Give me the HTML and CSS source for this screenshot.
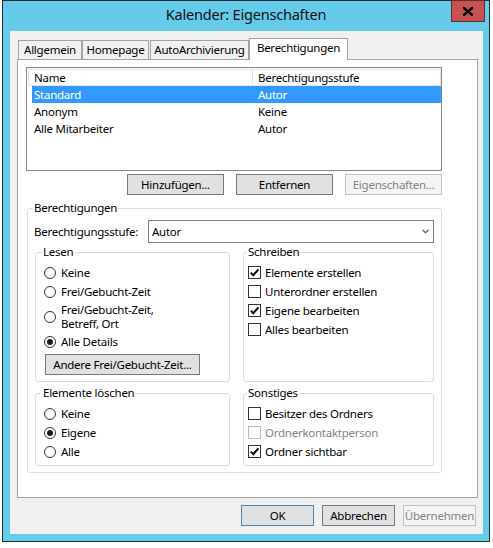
FILE: index.html
```html
<!DOCTYPE html>
<html lang="de">
<head>
<meta charset="utf-8">
<title>Kalender: Eigenschaften</title>
<link rel="stylesheet" href="styles.css">
</head>
<body>
<div class="window">
  <div class="titlebar">
    <span class="titlebar-spacer"></span>
    <div class="title">Kalender: Eigenschaften</div>
    <button class="close" type="button" aria-label="Schließen">
      <svg width="10" height="9" viewBox="0 0 10 9"><path d="M1 1 L9 8 M9 1 L1 8" stroke="#000" stroke-width="2.4" stroke-linecap="square" fill="none"/></svg>
    </button>
  </div>

  <div class="client">
    <div class="tabs">
      <div class="tab tab-general">Allgemein</div>
      <div class="tab tab-home">Homepage</div>
      <div class="tab tab-archive">AutoArchivierung</div>
      <div class="tab tab-perm tab-active">Berechtigungen</div>
    </div>

    <div class="page">
      <div class="listview">
        <div class="lv-header">
          <div class="lv-head lv-head-name">Name</div>
          <div class="lv-head lv-head-level">Berechtigungsstufe</div>
        </div>
        <div class="lv-row lv-row-selected">
          <div class="lv-cell lv-cell-name">Standard</div>
          <div class="lv-cell lv-cell-level">Autor</div>
        </div>
        <div class="lv-row">
          <div class="lv-cell lv-cell-name">Anonym</div>
          <div class="lv-cell lv-cell-level">Keine</div>
        </div>
        <div class="lv-row">
          <div class="lv-cell lv-cell-name">Alle Mitarbeiter</div>
          <div class="lv-cell lv-cell-level">Autor</div>
        </div>
      </div>

      <div class="list-actions">
        <button class="btn btn-list" type="button">Hinzufügen...</button>
        <button class="btn btn-list" type="button">Entfernen</button>
        <button class="btn btn-list btn-disabled" type="button">Eigenschaften...</button>
      </div>

      <fieldset class="group group-main">
        <legend class="legend legend-main">Berechtigungen</legend>
        <div class="group-body group-body-main">
          <div class="level-row">
            <span class="level-label">Berechtigungsstufe:</span>
            <div class="select">
              <span class="select-value">Autor</span>
              <svg class="select-arrow" width="7" height="5" viewBox="0 0 7 5"><path d="M0.5 0.8 L3.5 3.8 L6.5 0.8" stroke="#6a6a6a" stroke-width="1.3" fill="none"/></svg>
            </div>
          </div>

          <div class="group-grid">
            <fieldset class="group group-radio">
              <legend class="legend legend-radio">Lesen</legend>
              <div class="group-body group-body-radio">
                <div class="opt"><span class="radio"></span><span class="opt-text">Keine</span></div>
                <div class="opt"><span class="radio"></span><span class="opt-text">Frei/Gebucht-Zeit</span></div>
                <div class="opt opt-multi"><span class="radio"></span><span class="opt-text"><span class="opt-line">Frei/Gebucht-Zeit,</span><span class="opt-line">Betreff, Ort</span></span></div>
                <div class="opt"><span class="radio radio-on"></span><span class="opt-text">Alle Details</span></div>
                <button class="btn btn-freebusy" type="button">Andere Frei/Gebucht-Zeit...</button>
              </div>
            </fieldset>

            <fieldset class="group group-check">
              <legend class="legend legend-check">Schreiben</legend>
              <div class="group-body group-body-check">
                <div class="opt"><span class="check"><svg width="11" height="11" viewBox="0 0 11 11"><path d="M1.8 5.6 L4.3 8.2 L9.4 2.4" stroke="#000" stroke-width="2" fill="none"/></svg></span><span class="opt-text">Elemente erstellen</span></div>
                <div class="opt"><span class="check"></span><span class="opt-text">Unterordner erstellen</span></div>
                <div class="opt"><span class="check"><svg width="11" height="11" viewBox="0 0 11 11"><path d="M1.8 5.6 L4.3 8.2 L9.4 2.4" stroke="#000" stroke-width="2" fill="none"/></svg></span><span class="opt-text">Eigene bearbeiten</span></div>
                <div class="opt"><span class="check"></span><span class="opt-text">Alles bearbeiten</span></div>
              </div>
            </fieldset>

            <fieldset class="group group-radio">
              <legend class="legend legend-radio">Elemente löschen</legend>
              <div class="group-body group-body-radio group-body-delete">
                <div class="opt"><span class="radio"></span><span class="opt-text">Keine</span></div>
                <div class="opt"><span class="radio radio-on"></span><span class="opt-text">Eigene</span></div>
                <div class="opt"><span class="radio"></span><span class="opt-text">Alle</span></div>
              </div>
            </fieldset>

            <fieldset class="group group-check">
              <legend class="legend legend-check">Sonstiges</legend>
              <div class="group-body group-body-check group-body-delete">
                <div class="opt"><span class="check"></span><span class="opt-text">Besitzer des Ordners</span></div>
                <div class="opt opt-disabled"><span class="check check-disabled"></span><span class="opt-text">Ordnerkontaktperson</span></div>
                <div class="opt"><span class="check"><svg width="11" height="11" viewBox="0 0 11 11"><path d="M1.8 5.6 L4.3 8.2 L9.4 2.4" stroke="#000" stroke-width="2" fill="none"/></svg></span><span class="opt-text">Ordner sichtbar</span></div>
              </div>
            </fieldset>
          </div>
        </div>
      </fieldset>
    </div>

    <div class="dialog-actions">
      <button class="btn btn-dialog btn-default" type="button">OK</button>
      <button class="btn btn-dialog" type="button">Abbrechen</button>
      <button class="btn btn-dialog btn-disabled" type="button">Übernehmen</button>
    </div>
  </div>
</div>
</body>
</html>
```
FILE: styles.css
```css
* {
  box-sizing: border-box;
}

html,
body {
  margin: 0;
}

body {
  background: #fff;
  color: #000;
  font-family: "Noto Sans", "Open Sans", sans-serif;
  font-size: 11.5px;
  letter-spacing: -0.25px;
}

/* Window frame */
.window {
  margin-left: 2px;
  width: 488px;
  height: 542px;
  border: 1px solid #2d2d2d;
  background: #65cbea;
  padding: 0 6px 7px 7px;
  display: flex;
  flex-direction: column;
}

.titlebar {
  height: 30px;
  margin: 0 -6px 0 -7px;
  display: grid;
  grid-template-columns: 1fr auto 1fr;
  align-items: start;
}

.title {
  height: 27px;
  line-height: 27px;
  font-size: 14.5px;
  letter-spacing: -0.2px;
  color: #111;
  white-space: nowrap;
}

.close {
  justify-self: end;
  margin: -1px 4px 0 0;
  width: 34px;
  height: 22px;
  padding: 0;
  border: 1px solid #5b3230;
  background: #c75050;
  display: flex;
  align-items: center;
  justify-content: center;
}

.close svg {
  display: block;
}

/* Dialog client area */
.client {
  flex: 1;
  background: #f0f0f0;
  padding: 7px 5px 0 7px;
  display: flex;
  flex-direction: column;
}

.tabs {
  height: 21px;
  margin-left: 1px;
  display: flex;
  align-items: flex-end;
}

.tab {
  height: 19px;
  line-height: 17px;
  border: 1px solid #a3a3a3;
  border-bottom: none;
  background: #f0f0f0;
  text-align: center;
  white-space: nowrap;
}

.tab-general { width: 64px; }
.tab-home { width: 67px; }
.tab-archive { width: 99px; margin-left: 1px; }
.tab-perm { width: 99px; }

.tab-active {
  height: 22px;
  line-height: 17px;
  background: #fff;
  margin-bottom: -1px;
  position: relative;
  z-index: 1;
}

.page {
  height: 439px;
  border: 1px solid #a3a3a3;
  background: #fff;
  padding: 7px 0 0 8px;
}

/* Permission list */
.listview {
  width: 416px;
  height: 104px;
  border: 1px solid #828790;
  padding: 1px 0 0 1px;
}

.lv-header {
  height: 17px;
  display: flex;
  border: 1px solid #e5e5e5;
  border-right: none;
  line-height: 15px;
}

.lv-head {
  border-right: 1px solid #e5e5e5;
  padding-left: 5px;
}

.lv-head-name {
  width: 224px;
}

.lv-head-level {
  flex: 1;
}

.lv-row {
  height: 17px;
  line-height: 17px;
  margin-left: 4px;
  display: flex;
}

.lv-row-selected {
  background: #3399ff;
  color: #fff;
}

.lv-cell-name {
  width: 220px;
  padding-left: 2px;
}

.lv-cell-level {
  padding-left: 6px;
}

.list-actions {
  width: 416px;
  margin-top: 3px;
  display: flex;
  justify-content: flex-end;
  gap: 12px;
}

/* Buttons */
.btn {
  height: 21px;
  padding: 0;
  border: 1px solid #7a7a7a;
  background: #e1e1e1;
  color: #000;
  font: inherit;
  letter-spacing: inherit;
  line-height: 19px;
  text-align: center;
  white-space: nowrap;
}

.btn-list {
  width: 97px;
}

.btn-disabled {
  border-color: #c2c2c2;
  background: #f4f4f4;
  color: #838383;
}

.btn-default {
  border-color: #4a84b8;
}

.btn-freebusy {
  display: block;
  width: 155px;
  margin: 3px 0 0 1px;
}

.dialog-actions {
  margin-top: 7px;
  padding-right: 2px;
  display: flex;
  justify-content: flex-end;
  gap: 8px;
}

.btn-dialog {
  width: 73px;
}

/* Group boxes */
.group {
  margin: 0;
  padding: 0;
  min-width: 0;
  border: 1px solid #dcdcdc;
  border-radius: 3px;
}

.legend {
  padding: 0 1px;
  height: 14px;
  line-height: 14px;
}

.group-main {
  width: 415px;
  margin: 6px 0 0 1px;
}

.legend-main { margin-left: 5px; }
.legend-radio { margin-left: 6px; }
.legend-check { margin-left: 3px; }

.group-body-main {
  padding: 5px 7px 6px 6px;
}

.level-row {
  display: flex;
  align-items: center;
}

.level-label {
  width: 114px;
  flex: none;
}

.select {
  flex: 1;
  height: 23px;
  border: 1px solid #7f7f7f;
  background: #fff;
  padding: 0 4px 0 3px;
  display: flex;
  align-items: center;
  justify-content: space-between;
}

.select-arrow {
  display: block;
}

.group-grid {
  margin: 2px 0 0 1px;
  display: grid;
  grid-template-columns: 195px 1fr;
  column-gap: 13px;
  row-gap: 4px;
}

.group-body-radio {
  padding: 4px 0 6px 8px;
}

.group-body-check {
  padding: 4px 0 6px 4px;
}

.group-body-delete {
  padding-bottom: 4px;
}

/* Options */
.opt {
  height: 19px;
  display: flex;
  align-items: center;
}

.opt-multi {
  height: 31px;
  padding: 2px 0 1px;
}

.opt-multi .opt-text {
  display: flex;
  flex-direction: column;
}

.opt-line {
  display: block;
  height: 14px;
  line-height: 14px;
}

.opt-text {
  white-space: nowrap;
}

.radio {
  flex: none;
  width: 12px;
  height: 12px;
  margin-right: 5px;
  border: 1px solid #333;
  border-radius: 50%;
  background: #fff;
  display: flex;
  align-items: center;
  justify-content: center;
}

.radio-on::after {
  content: "";
  width: 6px;
  height: 6px;
  border-radius: 50%;
  background: #1b1b1b;
}

.check {
  flex: none;
  width: 13px;
  height: 13px;
  margin-right: 4px;
  border: 1px solid #333;
  background: #fff;
  display: flex;
  align-items: center;
  justify-content: center;
}

.check svg {
  display: block;
}

.check-disabled {
  border-color: #bcbcbc;
}

.opt-disabled {
  color: #838383;
}
```
